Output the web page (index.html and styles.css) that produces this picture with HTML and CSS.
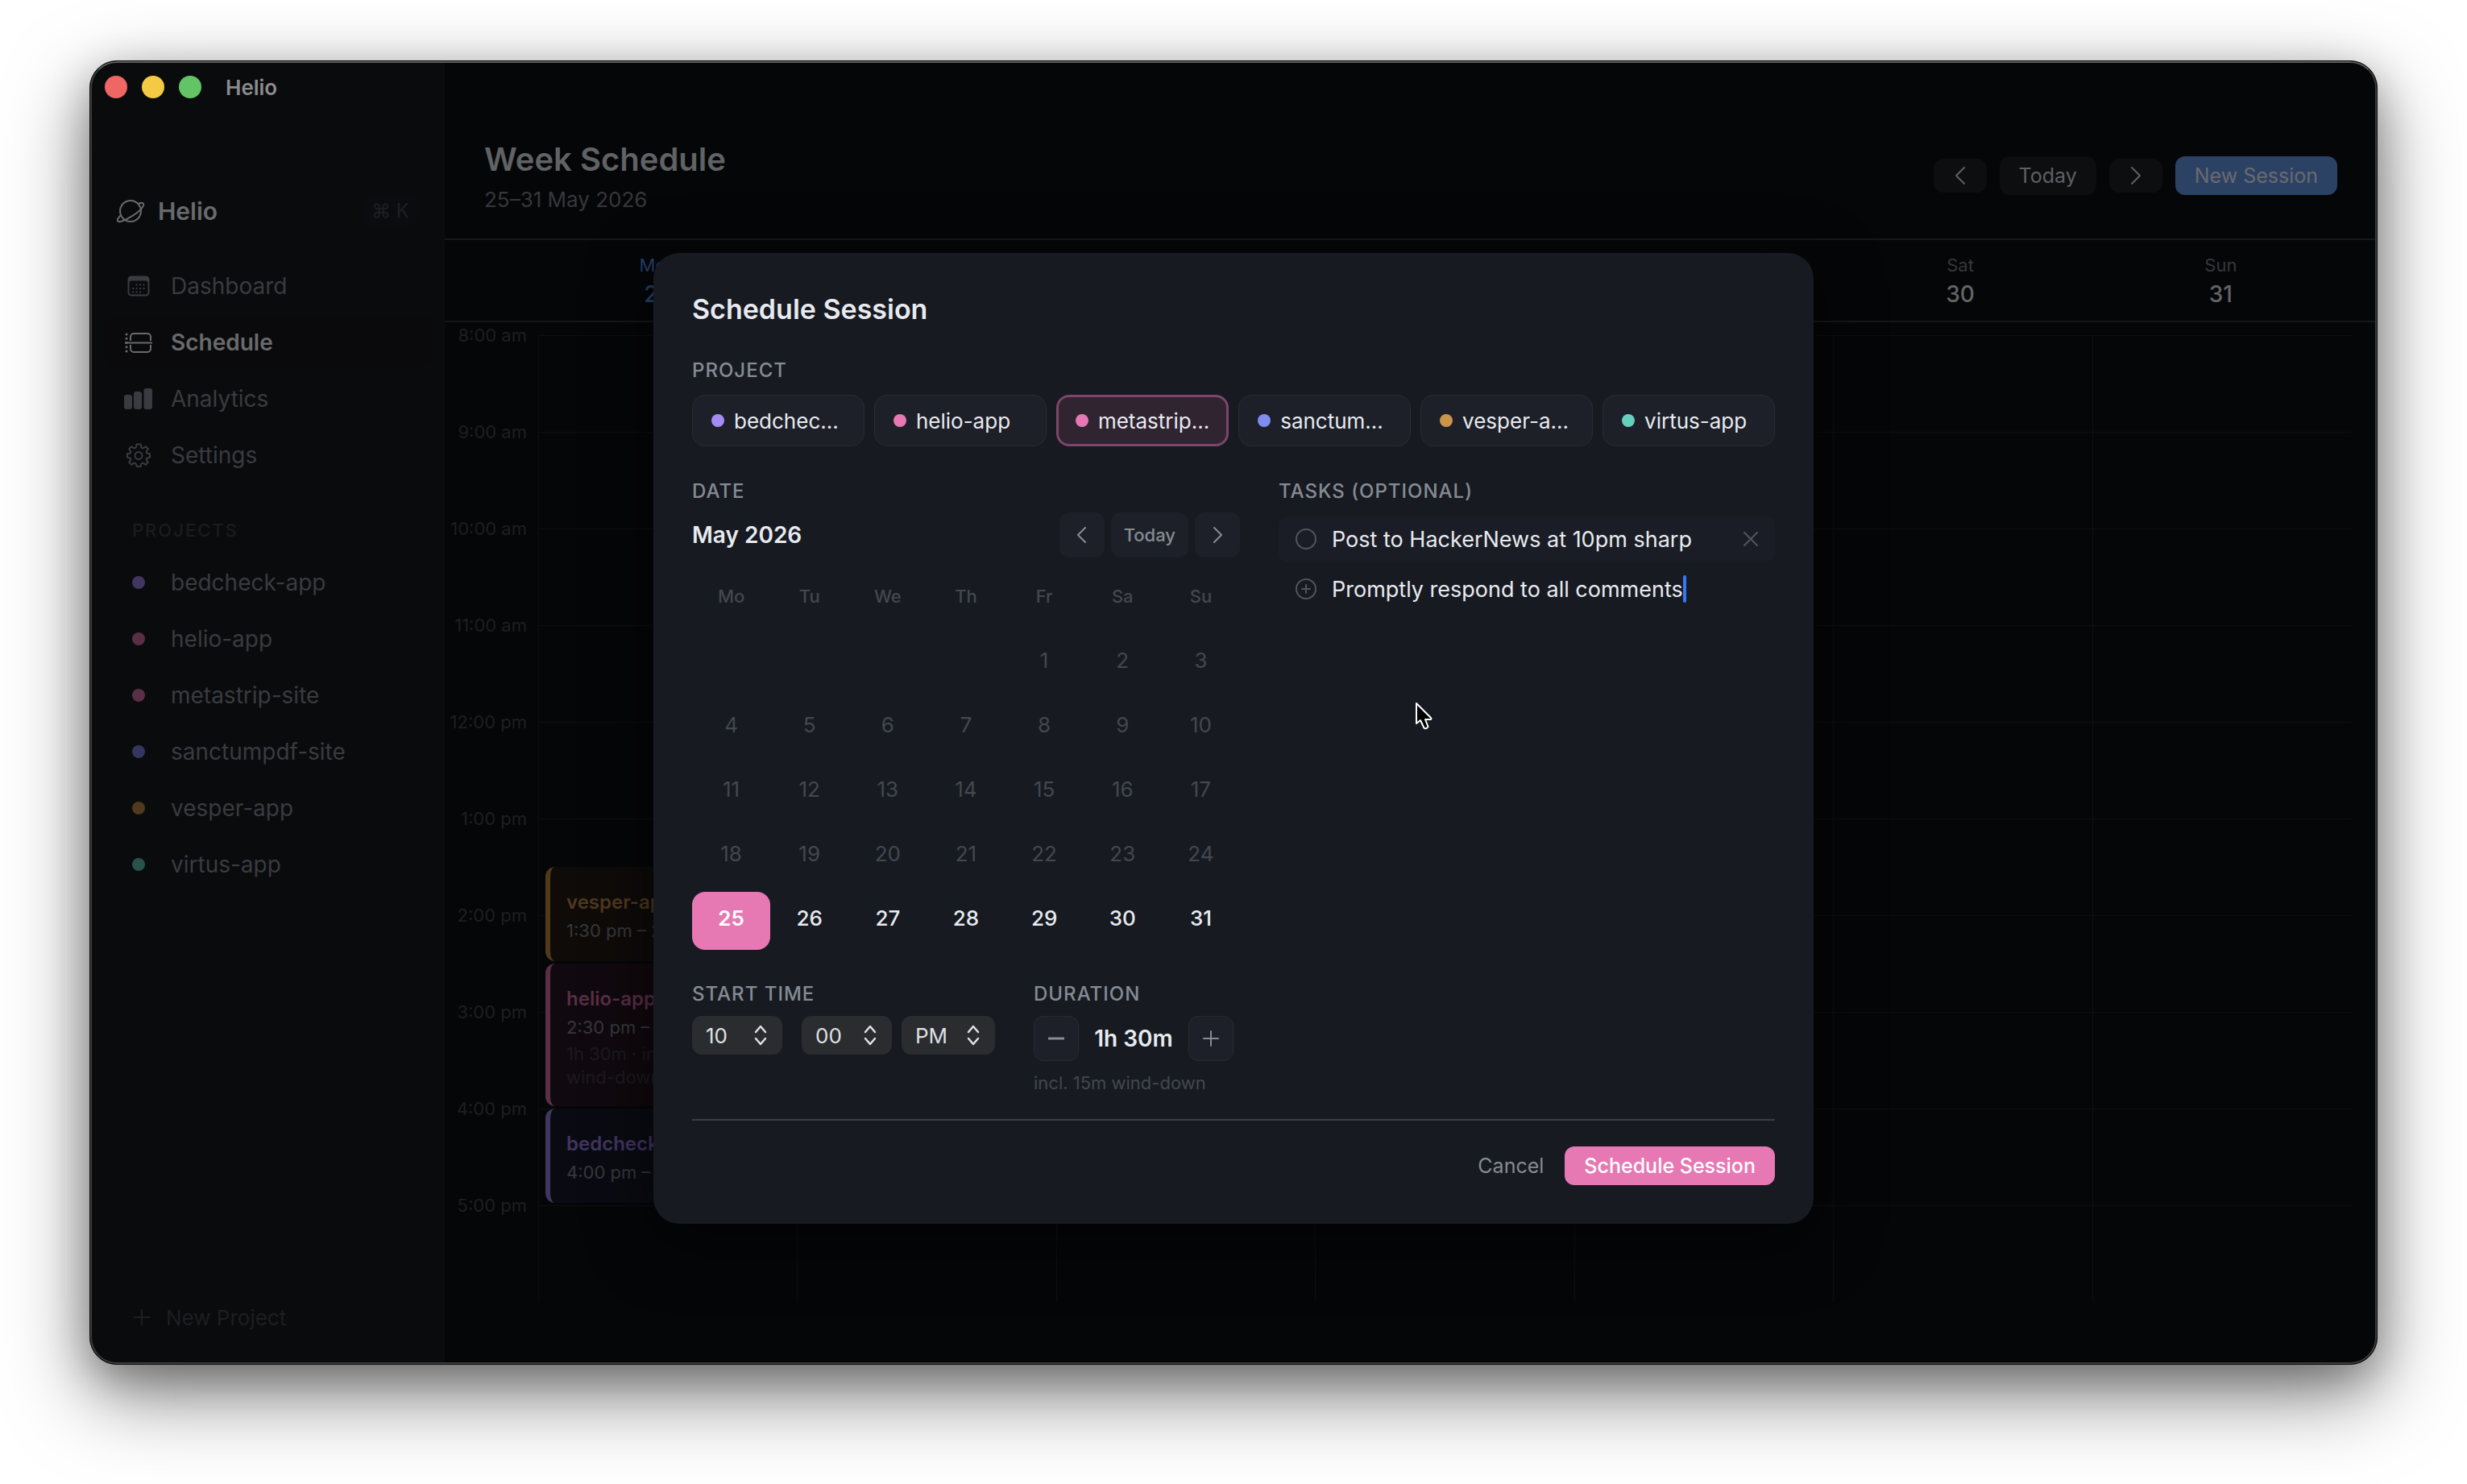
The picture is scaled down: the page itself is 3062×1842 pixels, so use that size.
FILE: index.html
```html
<!DOCTYPE html>
<html lang="en">
<head>
  <meta charset="UTF-8">
  <title>Helio</title>
  <link rel="stylesheet" href="styles.css">
</head>
<body>
  <div class="window">
    <aside class="sidebar">
      <div class="titlebar">
        <span class="light red"></span>
        <span class="light yellow"></span>
        <span class="light green"></span>
        <span class="titlebar-name">Helio</span>
      </div>

      <div class="brand">
        <svg width="36" height="36" viewBox="0 0 36 36" fill="none" stroke="currentColor" stroke-width="2">
          <circle cx="18" cy="18" r="13"/>
          <path d="M6.500 22.500C1 27.500 .5 31.500 4.500 31.200C10 30.800 31.500 19 34 11C35 7.500 32 7 27.500 9"/>
        </svg>
        <span class="brand-name">Helio</span>
        <kbd class="shortcut">⌘ K</kbd>
      </div>

      <nav class="nav">
        <a class="nav-item" href="#">
          <svg width="36" height="36" viewBox="0 0 36 36" fill="currentColor">
            <path fill-rule="evenodd" d="M9 5.500h18a4.500 4.500 0 0 1 4.500 4.500v16a4.500 4.500 0 0 1-4.500 4.500H9A4.500 4.500 0 0 1 4.500 26V10A4.500 4.500 0 0 1 9 5.500zM9 11.500a2.500 2.500 0 0 0-2.500 2.500v12A2.500 2.500 0 0 0 9 28.500h18a2.500 2.500 0 0 0 2.500-2.500V14a2.500 2.500 0 0 0-2.500-2.500z"/>
            <path d="M14.500 15.500h2v2h-2zm4.500 0h2v2h-2zm4.500 0h2v2h-2zM10 20h2v2h-2zm4.500 0h2v2h-2zm4.500 0h2v2h-2zm4.500 0h2v2h-2zM10 24.500h2v2h-2zm4.500 0h2v2h-2zm4.500 0h2v2h-2z"/>
          </svg>
          Dashboard
        </a>
        <a class="nav-item active" href="#">
          <svg width="36" height="36" viewBox="0 0 36 36" fill="none" stroke="currentColor" stroke-width="2">
            <path d="M8 16v-5a4 4 0 0 1 4-4h17a4 4 0 0 1 4 4v5M8 21v5a4 4 0 0 0 4 4h17a4 4 0 0 0 4-4v-5M1 18.500h34"/>
            <path stroke-width="3" stroke-linecap="round" d="M3 8v0M3 13.200v0M3 18.500v0M3 23.800v0M3 29v0"/>
          </svg>
          Schedule
        </a>
        <a class="nav-item" href="#">
          <svg width="36" height="36" viewBox="0 0 36 36" fill="currentColor">
            <rect x="0" y="13" width="10" height="18" rx="3"/>
            <rect x="12" y="9" width="10" height="22" rx="3"/>
            <rect x="24.500" y="5" width="10.500" height="26" rx="3"/>
          </svg>
          Analytics
        </a>
        <a class="nav-item" href="#">
          <svg width="36" height="36" viewBox="0 0 36 36" fill="none" stroke="currentColor" stroke-width="2" stroke-linejoin="round">
            <path d="M15.500 4.500h5l.8 4 2.200 1 3.400-2.300 3 3-2.300 3.400 1 2.100 3.400.5v4.600l-3.500.6-1 2.200 2.300 3.300-3 3-3.300-2.200-2.200 1-.8 3.300h-5l-.7-3.300-2.200-1-3.400 2.200-3-3 2.200-3.300-.9-2.200-3.500-.6v-4.600l3.500-.5.9-2.100-2.200-3.400 3-3 3.400 2.300 2.200-1z"/>
            <circle cx="18" cy="18.500" r="4.500"/>
          </svg>
          Settings
        </a>
      </nav>

      <h2 class="projects-title">PROJECTS</h2>
      <div class="projects">
        <a class="project violet" href="#"><span class="dot"></span>bedcheck-app</a>
        <a class="project pink" href="#"><span class="dot"></span>helio-app</a>
        <a class="project pink" href="#"><span class="dot"></span>metastrip-site</a>
        <a class="project indigo" href="#"><span class="dot"></span>sanctumpdf-site</a>
        <a class="project amber" href="#"><span class="dot"></span>vesper-app</a>
        <a class="project teal" href="#"><span class="dot"></span>virtus-app</a>
      </div>

      <button class="new-project">
        <svg width="20" height="20" viewBox="0 0 20 20" stroke="currentColor" stroke-width="2"><path d="M0 10h20M10 0v20"/></svg>
        New Project
      </button>
    </aside>

    <main class="main">
      <header class="header">
        <div>
          <h1>Week Schedule</h1>
          <p class="range">25–31 May 2026</p>
        </div>
        <div class="toolbar">
          <button class="tool arrow" aria-label="Previous week">
            <svg width="14" height="22" viewBox="0 0 14 22" fill="none" stroke="currentColor" stroke-width="2" stroke-linecap="round" stroke-linejoin="round"><path d="M12 1L2 11l10 10"/></svg>
          </button>
          <button class="tool">Today</button>
          <button class="tool arrow" aria-label="Next week">
            <svg width="14" height="22" viewBox="0 0 14 22" fill="none" stroke="currentColor" stroke-width="2" stroke-linecap="round" stroke-linejoin="round"><path d="M2 1l10 10L2 21"/></svg>
          </button>
          <button class="tool new-session">New Session</button>
        </div>
      </header>

      <div class="day-heads">
        <div class="day-head current"><span>Mon</span><strong>25</strong></div>
        <div class="day-head"></div>
        <div class="day-head"></div>
        <div class="day-head"></div>
        <div class="day-head"></div>
        <div class="day-head"><span>Sat</span><strong>30</strong></div>
        <div class="day-head"><span>Sun</span><strong>31</strong></div>
      </div>

      <div class="week">
        <div class="hours">
          <div class="hour">8:00 am</div>
          <div class="hour">9:00 am</div>
          <div class="hour">10:00 am</div>
          <div class="hour">11:00 am</div>
          <div class="hour">12:00 pm</div>
          <div class="hour">1:00 pm</div>
          <div class="hour">2:00 pm</div>
          <div class="hour">3:00 pm</div>
          <div class="hour">4:00 pm</div>
          <div class="hour">5:00 pm</div>
        </div>
        <div class="days">
          <div class="day">
            <div class="event amber" style="grid-row: 12 / 14">
              <strong>vesper-app</strong>
              <span>1:30 pm – 2:30 pm</span>
            </div>
            <div class="event pink" style="grid-row: 14 / 17">
              <strong>helio-app</strong>
              <span>2:30 pm – 4:00 pm</span>
              <small>1h 30m · incl. 15m<br>wind-down</small>
            </div>
            <div class="event violet" style="grid-row: 17 / 19">
              <strong>bedcheck-app</strong>
              <span>4:00 pm – 5:00 pm</span>
            </div>
          </div>
          <div class="day"></div>
          <div class="day"></div>
          <div class="day"></div>
          <div class="day"></div>
          <div class="day"></div>
          <div class="day"></div>
        </div>
      </div>
    </main>

    <div class="overlay">
      <form class="modal">
        <h2 class="modal-title">Schedule Session</h2>

        <div class="label">PROJECT</div>
        <div class="chips">
          <label class="chip violet"><input class="dot" type="radio" name="project">bedchec...</label>
          <label class="chip pink"><input class="dot" type="radio" name="project">helio-app</label>
          <label class="chip pink selected"><input class="dot" type="radio" name="project" checked>metastrip...</label>
          <label class="chip indigo"><input class="dot" type="radio" name="project">sanctum...</label>
          <label class="chip amber"><input class="dot" type="radio" name="project">vesper-a...</label>
          <label class="chip teal"><input class="dot" type="radio" name="project">virtus-app</label>
        </div>

        <div class="columns">
          <section class="left">
            <div class="label">DATE</div>
            <div class="month-bar">
              <span class="month">May 2026</span>
              <button type="button" class="small-btn" aria-label="Previous month">
                <svg width="12" height="20" viewBox="0 0 12 20" fill="none" stroke="currentColor" stroke-width="2" stroke-linecap="round" stroke-linejoin="round"><path d="M10 1L1 10l9 9"/></svg>
              </button>
              <button type="button" class="small-btn today">Today</button>
              <button type="button" class="small-btn" aria-label="Next month">
                <svg width="12" height="20" viewBox="0 0 12 20" fill="none" stroke="currentColor" stroke-width="2" stroke-linecap="round" stroke-linejoin="round"><path d="M2 1l9 9-9 9"/></svg>
              </button>
            </div>

            <div class="weekdays">
              <span>Mo</span><span>Tu</span><span>We</span><span>Th</span><span>Fr</span><span>Sa</span><span>Su</span>
            </div>
            <div class="dates" id="dates"></div>

            <div class="time-row">
              <div class="start">
                <div class="label">START TIME</div>
                <div class="selects">
                  <span class="select hour-select">
                    <select aria-label="Hour"><option>10</option></select>
                    <svg width="16" height="30" viewBox="0 0 16 30" fill="none" stroke="currentColor" stroke-width="2.500" stroke-linecap="round" stroke-linejoin="round"><path d="M2 11l6-7 6 7M2 19l6 7 6-7"/></svg>
                  </span>
                  <span class="select">
                    <select aria-label="Minute"><option>00</option></select>
                    <svg width="16" height="30" viewBox="0 0 16 30" fill="none" stroke="currentColor" stroke-width="2.500" stroke-linecap="round" stroke-linejoin="round"><path d="M2 11l6-7 6 7M2 19l6 7 6-7"/></svg>
                  </span>
                  <span class="select period">
                    <select aria-label="AM or PM"><option>PM</option></select>
                    <svg width="16" height="30" viewBox="0 0 16 30" fill="none" stroke="currentColor" stroke-width="2.500" stroke-linecap="round" stroke-linejoin="round"><path d="M2 11l6-7 6 7M2 19l6 7 6-7"/></svg>
                  </span>
                </div>
              </div>
              <div class="duration">
                <div class="label">DURATION</div>
                <div class="stepper">
                  <button type="button" class="step" aria-label="Shorter">
                    <svg width="20" height="20" viewBox="0 0 20 20" stroke="currentColor" stroke-width="3" stroke-linecap="round"><path d="M1 10h18"/></svg>
                  </button>
                  <span class="length">1h 30m</span>
                  <button type="button" class="step" aria-label="Longer">
                    <svg width="20" height="20" viewBox="0 0 20 20" stroke="currentColor" stroke-width="2" stroke-linecap="round"><path d="M1 10h18M10 1v18"/></svg>
                  </button>
                </div>
                <p class="hint">incl. 15m wind-down</p>
              </div>
            </div>
          </section>

          <section class="right">
            <div class="label">TASKS (OPTIONAL)</div>
            <div class="task filled">
              <input class="check" type="checkbox" id="task1">
              <label for="task1">Post to HackerNews at 10pm sharp</label>
              <button type="button" class="remove" aria-label="Remove task">
                <svg width="18" height="18" viewBox="0 0 18 18" stroke="currentColor" stroke-width="2" stroke-linecap="round"><path d="M1 1l16 16M17 1L1 17"/></svg>
              </button>
            </div>
            <div class="task">
              <svg class="add" width="26" height="26" viewBox="0 0 26 26" fill="none" stroke="currentColor" stroke-width="2" stroke-linecap="round"><circle cx="13" cy="13" r="12"/><path d="M8 13h10M13 8v10"/></svg>
              <input class="task-input" type="text" aria-label="New task" value="Promptly respond to all comments">
              <span class="caret"></span>
            </div>
          </section>
        </div>

        <div class="footer">
          <button type="button" class="cancel">Cancel</button>
          <button type="button" class="submit">Schedule Session</button>
        </div>
      </form>
    </div>

    <svg class="cursor" width="28" height="40" viewBox="0 0 28 40" fill="#000" stroke="#fff" stroke-width="2" stroke-linejoin="round">
      <path d="M5 3v25l5-4 4.500 9.500q2.500 2 5-1.500L16 23h7q1-1 0-2z"/>
    </svg>
  </div>

  <script>
    const dates = document.getElementById('dates');
    const today = 25;

    for (let d = 1; d <= 31; d++) {
      const button = document.createElement('button');
      button.type = 'button';
      button.textContent = d;
      button.className = 'date';
      if (d < today) button.classList.add('past');
      if (d === today) button.classList.add('selected');
      dates.appendChild(button);
    }
  </script>
</body>
</html>
```
FILE: styles.css
```css
* {
  box-sizing: border-box;
}
body {
  margin: 0;
  min-height: 100vh;
  padding: 75px 111px 148px;
  display: flex;
  background: #fff;
  font-family: Inter, "Liberation Sans", sans-serif;
  font-size: 26px;
  color: #e8eaf0;
}
h1, h2, p {
  margin: 0;
}
button, input, select {
  font: inherit;
  color: inherit;
  border: none;
  background: none;
  padding: 0;
  margin: 0;
}
button {
  display: flex;
  align-items: center;
  justify-content: center;
}
a {
  color: inherit;
  text-decoration: none;
}
svg {
  flex: none;
}

.violet { --color: #a58bf5; --dim: #41365f; --tint: #0a0b12; }
.pink { --color: #e678b4; --dim: #592f46; --tint: #10090f; }
.indigo { --color: #818cf0; --dim: #33365f; }
.amber { --color: #c9954a; --dim: #50391d; --tint: #0e0b09; }
.teal { --color: #66d0be; --dim: #29534a; }

/* window */
.window {
  position: relative;
  flex: 1;
  display: flex;
  background: #050608;
  border: 1px solid #0c0c0c;
  border-radius: 34px;
  overflow: hidden;
  box-shadow: 0 36px 100px rgba(0, 0, 0, 0.5), 0 16px 50px rgba(0, 0, 0, 0.25);
}
.window::after {
  content: "";
  position: absolute;
  inset: 0;
  border: 2px solid #3c3c3c;
  border-top-color: #5e5f60;
  border-radius: 33px;
  pointer-events: none;
}

/* sidebar */
.sidebar {
  width: 440px;
  flex: none;
  display: flex;
  flex-direction: column;
  padding: 0 16px 28px 18px;
  background: #0a0b0d;
  color: #393b40;
}
.titlebar {
  height: 64px;
  display: flex;
  align-items: center;
  gap: 18px;
}
.light {
  width: 28px;
  height: 28px;
  border-radius: 50%;
}
.red { background: #ee6765; }
.yellow { background: #f4c944; }
.green { background: #63c466; }
.titlebar-name {
  margin-left: 12px;
  font-weight: 600;
  color: #8b8c8d;
}
.brand {
  height: 60px;
  margin-top: 92px;
  padding: 0 16px 0 14px;
  display: flex;
  align-items: center;
  gap: 16px;
  color: #696a6c;
}
.brand-name {
  flex: 1;
  font-size: 30px;
  font-weight: 600;
}
.shortcut {
  padding: 0 12px;
  border-radius: 12px;
  background: #0b0c10;
  font: 24px/38px Inter, "DejaVu Sans", sans-serif;
  color: #1d1f22;
}
.nav, .projects {
  display: flex;
  flex-direction: column;
  gap: 8px;
}
.nav {
  margin-top: 32px;
}
.nav-item, .project {
  height: 62px;
  padding: 0 24px;
  display: flex;
  align-items: center;
  gap: 22px;
  border-radius: 12px;
  font-size: 28px;
}
.nav-item.active {
  color: #696a6c;
  font-weight: 600;
  background: #0a0a0c;
}
.projects-title {
  margin: 46px 0 18px;
  padding: 0 34px;
  font-size: 22px;
  line-height: 32px;
  font-weight: 500;
  letter-spacing: 2px;
  color: #1b1c1f;
}
.dot {
  flex: none;
  width: 16px;
  height: 16px;
  border-radius: 50%;
  background: var(--color);
}
.project .dot {
  margin: 0 10px;
  background: var(--dim);
}
.new-project {
  height: 60px;
  margin-top: auto;
  padding: 0 36px;
  justify-content: flex-start;
  gap: 20px;
  color: #1d1f22;
}

/* week view */
.main {
  flex: 1;
  min-width: 0;
}
.header {
  padding: 96px 49px 32px;
  display: flex;
  align-items: center;
  justify-content: space-between;
  border-bottom: 2px solid #161719;
}
h1 {
  font-size: 40px;
  line-height: 52px;
  font-weight: 600;
  color: #606264;
}
.range {
  margin-top: 8px;
  line-height: 32px;
  color: #36373b;
}
.toolbar {
  display: flex;
  align-items: center;
  gap: 16px;
}
.tool {
  height: 48px;
  padding: 0 24px;
  border-radius: 12px;
  background: #0d0e10;
  font-size: 25px;
  color: #5f6062;
}
.tool.arrow {
  width: 66px;
  height: 42px;
  padding: 0;
}
.tool.new-session {
  background: #2c4265;
  color: #696b6f;
}
.day-heads {
  padding: 15px 32px 15px 103px;
  display: grid;
  grid-template-columns: repeat(7, 1fr);
  border-bottom: 2px solid #161719;
}
.day-head {
  display: flex;
  flex-direction: column;
  align-items: center;
  gap: 2px;
  font-size: 22px;
  line-height: 32px;
  color: #36373b;
}
.day-head strong {
  font-size: 28px;
  line-height: 36px;
  font-weight: 500;
  color: #636466;
}
.day-head.current, .day-head.current strong {
  color: #25406b;
}
.week {
  margin-top: 16px;
  padding-right: 32px;
  display: flex;
  align-items: flex-start;
}
.hours {
  width: 116px;
  flex: none;
  margin-top: -16px;
  padding-right: 14px;
  text-align: right;
  font-size: 22px;
  line-height: 32px;
  color: #1e1f21;
}
.hour {
  height: 120px;
}
.days {
  flex: 1;
  display: grid;
  grid-template-columns: repeat(7, 1fr);
  background: repeating-linear-gradient(#0e0f11 0 1px, transparent 1px 120px);
}
.day {
  display: grid;
  grid-template-rows: repeat(20, 60px);
  border-left: 1px solid #0e0f11;
}
.event {
  margin: 0 8px 3px;
  padding: 28px 20px 0;
  display: flex;
  flex-direction: column;
  border-left: 6px solid var(--dim);
  border-radius: 12px;
  background: var(--tint);
  font-size: 22px;
  color: #37383b;
}
.event strong {
  font-size: 24px;
  line-height: 32px;
  font-weight: 600;
  color: var(--dim);
}
.event span {
  line-height: 38px;
}
.event small {
  font-size: 22px;
  line-height: 29px;
  color: #1c1b1f;
}

/* schedule dialog */
.overlay {
  position: absolute;
  inset: 64px 0 0;
  display: flex;
  align-items: center;
  justify-content: center;
}
.modal {
  width: 1440px;
  max-width: 100%;
  padding: 48px;
  border-radius: 32px;
  background: #171a21;
  box-shadow: 0 20px 80px rgba(0, 0, 0, 0.6);
}
.modal-title {
  font-size: 34px;
  line-height: 44px;
  font-weight: 600;
}
.label {
  font-size: 24px;
  line-height: 32px;
  font-weight: 500;
  letter-spacing: 1px;
  color: #868b94;
}
.modal-title + .label {
  margin-top: 38px;
}
.chips {
  margin-top: 14px;
  display: grid;
  grid-template-columns: repeat(6, 1fr);
  gap: 12px;
}
.chip {
  height: 64px;
  padding: 0 23px;
  display: flex;
  align-items: center;
  gap: 12px;
  border: 1px solid #282b30;
  border-radius: 16px;
  background: #1d2028;
  white-space: nowrap;
}
.chip.selected {
  border: 3px solid #7f456b;
  padding: 0 21px;
  background: #302431;
}
.chip .dot {
  appearance: none;
}
.columns {
  margin-top: 40px;
  display: flex;
  gap: 48px;
}
.left {
  flex: 0 0 680px;
}
.right {
  flex: 1;
  min-width: 0;
}
.month-bar {
  margin-top: 10px;
  display: flex;
  align-items: center;
  gap: 8px;
}
.month {
  flex: 1;
  font-size: 28px;
  font-weight: 600;
}
.small-btn, .step {
  width: 56px;
  height: 56px;
  border-radius: 12px;
  background: #1d2028;
  color: #868b94;
}
.small-btn.today {
  width: auto;
  padding: 0 16px;
  font-size: 22px;
  font-weight: 500;
}
.weekdays, .dates {
  display: grid;
  grid-template-columns: repeat(7, 1fr);
  text-align: center;
}
.weekdays {
  margin-top: 32px;
  font-size: 22px;
  line-height: 32px;
  font-weight: 500;
  color: #43484f;
}
.dates {
  margin-top: 31px;
  row-gap: 8px;
}
.date {
  height: 72px;
  padding-bottom: 8px;
  border-radius: 16px;
  font-weight: 500;
}
.date:first-child {
  grid-column-start: 5;
}
.date.past {
  font-weight: 400;
  color: #43484f;
}
.date.selected {
  background: #e678b4;
  color: #fff;
  font-weight: 600;
}
.time-row {
  margin-top: 39px;
  display: flex;
  gap: 48px;
}
.selects {
  margin-top: 11px;
  display: flex;
  gap: 12px;
}
.select {
  width: 112px;
  height: 48px;
  display: grid;
  align-items: center;
  border-radius: 12px;
  background: #2a2c30;
  color: #dfe0e1;
}
.select select, .select svg {
  grid-area: 1 / 1;
}
.select select {
  appearance: none;
  width: 100%;
  height: 100%;
  padding: 0 17px;
}
.select option {
  background: #2a2c30;
}
.select svg {
  justify-self: end;
  margin-right: 19px;
  pointer-events: none;
}
.hour-select {
  margin-right: 12px;
}
.period {
  width: 116px;
}
.stepper {
  margin-top: 11px;
  display: flex;
  align-items: center;
}
.step {
  border: 1px solid #282b30;
}
.length {
  width: 136px;
  text-align: center;
  font-size: 28px;
  font-weight: 600;
}
.hint {
  margin-top: 11px;
  font-size: 22px;
  line-height: 32px;
  color: #43484f;
}
.task {
  height: 58px;
  margin-top: 4px;
  padding: 0 21px;
  display: flex;
  align-items: center;
  gap: 19px;
  border-radius: 12px;
  font-size: 27px;
}
.task.filled {
  margin-top: 14px;
  background: #1a1d25;
}
.check {
  appearance: none;
  width: 26px;
  height: 26px;
  border: 2px solid #50555d;
  border-radius: 50%;
}
.add, .remove {
  color: #50555d;
}
.remove {
  margin-left: auto;
}
.task-input {
  field-sizing: content;
  outline: none;
}
.caret {
  width: 4px;
  height: 34px;
  margin-left: -19px;
  border-radius: 2px;
  background: #3478f6;
}
.footer {
  margin-top: 29px;
  padding-top: 32px;
  display: flex;
  justify-content: flex-end;
  gap: 26px;
  border-top: 2px solid #3b3e45;
  font-size: 25px;
}
.cancel {
  color: #868b94;
}
.submit {
  height: 48px;
  padding: 0 24px;
  border-radius: 12px;
  background: #e678b4;
  color: #fff;
  font-weight: 500;
}

.cursor {
  position: absolute;
  left: 1641px;
  top: 794px;
}
```
